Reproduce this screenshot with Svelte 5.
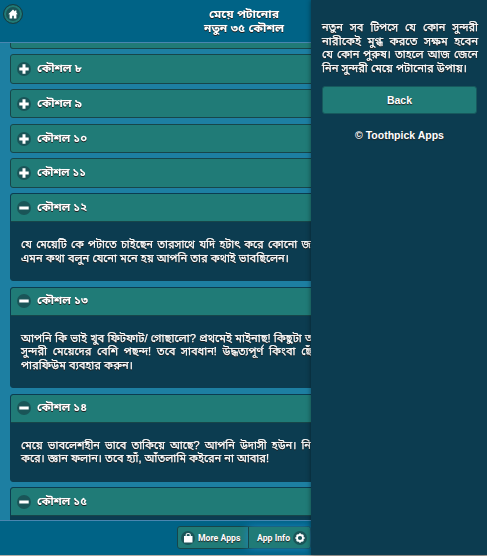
<script lang="ts">
	interface Line {
		text: string;
		width: number;
		gap?: number;
	}

	interface Tip {
		title: string;
		titleWidth: number;
		height?: number;
		lines?: Line[];
	}

	const tips: Tip[] = [
		{ title: 'কৌশল ৮', titleWidth: 45 },
		{ title: 'কৌশল ৯', titleWidth: 45 },
		{ title: 'কৌশল ১০', titleWidth: 50 },
		{ title: 'কৌশল ১১', titleWidth: 49 },
		{
			title: 'কৌশল ১২',
			titleWidth: 50,
			height: 88,
			lines: [
				{ text: 'যে মেয়েটি কে পটাতে চাইছেন তারসাথে যদি হটাৎ করে কোনো জ', width: 290, gap: 1.2 },
				{ text: 'এমন কথা বলুন যেনো মনে হয় আপনি তার কথাই ভাবছিলেন।', width: 268 }
			]
		},
		{
			title: 'কৌশল ১৩',
			titleWidth: 51,
			height: 101.7,
			lines: [
				{ text: 'আপনি কি ভাই খুব ফিটফাট/ গোছালো? প্রথমেই মাইনাছ! কিছুটা অ', width: 294 },
				{ text: 'সুন্দরী মেয়েদের বেশি পছন্দ! তবে সাবধান! উদ্ধত্যপূর্ণ কিংবা ছেঁ', width: 291, gap: 2.5 },
				{ text: 'পারফিউম ব্যবহার করুন।', width: 112 }
			]
		},
		{
			title: 'কৌশল ১৪',
			titleWidth: 50,
			height: 88,
			lines: [
				{ text: 'মেয়ে ভাবলেশহীন ভাবে তাকিয়ে আছে? আপনি উদাসী হউন। নি', width: 290, gap: 2 },
				{ text: 'করে। জ্ঞান ফলান। তবে হ্যাঁ, আঁতলামি কইরেন না আবার!', width: 248 }
			]
		},
		{ title: 'কৌশল ১৫', titleWidth: 50, height: 88, lines: [] }
	];

	const intro: Line[] = [
		{ text: 'নতুন সব টিপসে যে কোন সুন্দরী', width: 156, gap: 4 },
		{ text: 'নারীকেই মুগ্ধ করতে সক্ষম হবেন', width: 156, gap: 3.2 },
		{ text: 'যে কোন পুরুষ। তাহলে আজ জেনে', width: 156, gap: 1 },
		{ text: 'নিন সুন্দরী মেয়ে পটানোর উপায়।', width: 145 }
	];
</script>

{#snippet line(text: string, width: number, bold = false, gap = 0)}
	<svg class="line" class:bold {width} height="14">
		<text x="0" y="10" textLength={width} lengthAdjust="spacingAndGlyphs" word-spacing={gap}>{text}</text>
	</svg>
{/snippet}

<div class="app">
	<header>
		<button class="home" aria-label="Home">
			<svg viewBox="0 0 14 14" width="14" height="14">
				<path d="M7 2.6 2.3 7.2h1.3V11.5h2.6V8.7h1.6v2.8h2.6V7.2h1.3L10.4 5.8V3.4H9v1.1z" fill="#fff" />
			</svg>
		</button>
		<h1>
			{@render line('মেয়ে পটানোর', 70, true)}
			{@render line('নতুন ৩৫ কৌশল', 80, true)}
		</h1>
	</header>

	<main>
		<div class="tip previous"></div>
		{#each tips as tip}
			<section class="tip" class:open={tip.lines} style:height={tip.height ? `${tip.height}px` : null}>
				<h2>
					<span class="disc">
						<svg viewBox="0 0 14 14" width="14" height="14">
							<path d={tip.lines ? 'M2.3 5.5h9.4v3H2.3z' : 'M5.5 2.3h3v3.2h3.2v3H8.5v3.2h-3V8.5H2.3v-3h3.2z'} fill="#fff" />
						</svg>
					</span>
					{@render line(tip.title, tip.titleWidth, true)}
				</h2>
				{#if tip.lines}
					<div class="content">
						{#each tip.lines as row}
							{@render line(row.text, row.width, false, row.gap)}
						{/each}
					</div>
				{/if}
			</section>
		{/each}
	</main>

	<footer>
		<div class="group">
			<button>
				<span class="disc">
					<svg viewBox="0 0 14 14" width="14" height="14">
						<path d="M3 5h8.5v6.5H3z" fill="#fff" />
						<path d="M5.2 5V3.6Q5.2 2.5 7.2 2.5T9.2 3.6V5" fill="none" stroke="#fff" stroke-width="1.1" />
					</svg>
				</span>
				More Apps
			</button>
			<button class="info">
				App Info
				<span class="disc">
					<svg viewBox="0 0 14 14" width="14" height="14">
						<circle cx="7" cy="7" r="3" fill="none" stroke="#fff" stroke-width="1.8" />
						<path d="M7 2.3v1.5M7 10.2v1.5M2.3 7h1.5M10.2 7h1.5M3.7 3.7l1 1M9.3 9.3l1 1M3.7 10.3l1-1M9.3 4.7l1-1" stroke="#fff" stroke-width="1.6" />
					</svg>
				</span>
			</button>
		</div>
	</footer>

	<aside>
		<div class="intro">
			{#each intro as row}
				{@render line(row.text, row.width, false, row.gap)}
			{/each}
		</div>
		<button class="back">Back</button>
		<p>© Toothpick Apps</p>
	</aside>
</div>

<style>
	.app {
		position: relative;
		width: 487px;
		height: 556px;
		overflow: hidden;
		display: flex;
		flex-direction: column;
		background: #1d7fa2;
		color: #fff;
		font-family: 'Liberation Sans', 'Noto Sans Bengali', sans-serif;
		text-shadow: 0 1px 1px #222;
	}

	button {
		font: inherit;
		color: inherit;
		text-shadow: inherit;
		padding: 0;
	}

	header {
		height: 42px;
		flex: none;
		position: relative;
		background: #006386;
		border-bottom: 1px solid #4a86b0;
	}

	.home {
		box-sizing: border-box;
		position: absolute;
		left: 3px;
		top: 4px;
		width: 20px;
		height: 20px;
		display: flex;
		align-items: center;
		justify-content: center;
		border: 1px solid #153f43;
		border-radius: 50%;
		background: #1a5558;
		box-shadow: inset 0 0 0 2px #207b77;
	}

	h1 {
		margin: 0;
		padding-top: 8px;
		display: flex;
		flex-direction: column;
		align-items: center;
	}

	.line {
		display: block;
		flex: none;
		overflow: visible;
		fill: #fff;
		stroke: #fff;
		stroke-width: 0.25px;
		font-size: 11px;
		filter: drop-shadow(0 1px 0.5px #222);
		text-shadow: none;
	}

	.bold {
		font-weight: bold;
		stroke: none;
	}

	main {
		flex: 1;
		min-height: 0;
		overflow: hidden;
		padding-left: 10px;
		display: flex;
		flex-direction: column;
		gap: 5.4px;
	}

	.tip {
		box-sizing: border-box;
		width: 467px;
		height: 29.3px;
		flex: none;
		overflow: hidden;
		border: 1px solid #17464a;
		border-radius: 3px;
		background: #207b77;
	}

	.tip.open {
		border-color: #0c3c50;
		background: #0c3c50;
	}

	.tip.previous {
		height: 6px;
		border-top: 0;
		border-radius: 0 0 3px 3px;
	}

	h2 {
		box-sizing: border-box;
		height: 28px;
		margin: 0;
		padding-left: 6px;
		display: flex;
		align-items: center;
		gap: 6px;
	}

	.open h2 {
		height: 29px;
		margin: -1px -1px 0;
		padding-left: 6px;
		border: 1px solid #17464a;
		border-width: 1px 0 1px 1px;
		border-radius: 3px 3px 0 0;
		background: #207b77;
	}

	.disc {
		width: 14px;
		height: 14px;
		flex: none;
		display: flex;
		border-radius: 50%;
		background: #1a5558;
	}

	.content {
		padding: 16px 0 0 10px;
	}

	.content .line,
	.intro .line {
		margin-bottom: -0.4px;
	}

	footer {
		height: 34px;
		flex: none;
		padding-left: 177px;
		background: #006386;
		border-top: 1px solid #4a86b0;
		border-bottom: 1px solid #b3aea6;
	}

	.group {
		box-sizing: border-box;
		width: 134px;
		height: 23px;
		margin-top: 5px;
		display: flex;
		border: 1px solid #17464a;
		border-radius: 3px;
		background: #207b77;
		font-family: Roboto, sans-serif;
		font-size: 8.7px;
		font-weight: bold;
	}

	.group button {
		width: 70px;
		flex: none;
		display: flex;
		align-items: center;
		gap: 3px;
		padding-left: 3px;
		border: 0;
		background: none;
		white-space: nowrap;
	}

	.group .info {
		box-sizing: border-box;
		width: 62px;
		padding-left: 8px;
		gap: 3px;
		border-left: 1px solid #17464a;
		box-shadow: 0 0 8px #1f86c5;
		background: #207b77;
		border-radius: 0 3px 3px 0;
	}

	aside {
		box-sizing: border-box;
		position: absolute;
		top: 0;
		right: 0;
		width: 176px;
		height: 555px;
		padding: 21px 10px 0 11px;
		background: #0c3c50;
		box-shadow: 0 0 5px rgba(0, 0, 0, 0.45);
	}

	.back {
		box-sizing: border-box;
		display: block;
		width: 155px;
		height: 28px;
		margin-top: 11px;
		border: 1px solid #17595d;
		border-radius: 3px;
		background: #207b77;
		font-size: 10.5px;
		font-weight: bold;
	}

	aside p {
		margin: 15px 0 0;
		font-size: 10.5px;
		font-weight: bold;
		text-align: center;
	}
</style>
